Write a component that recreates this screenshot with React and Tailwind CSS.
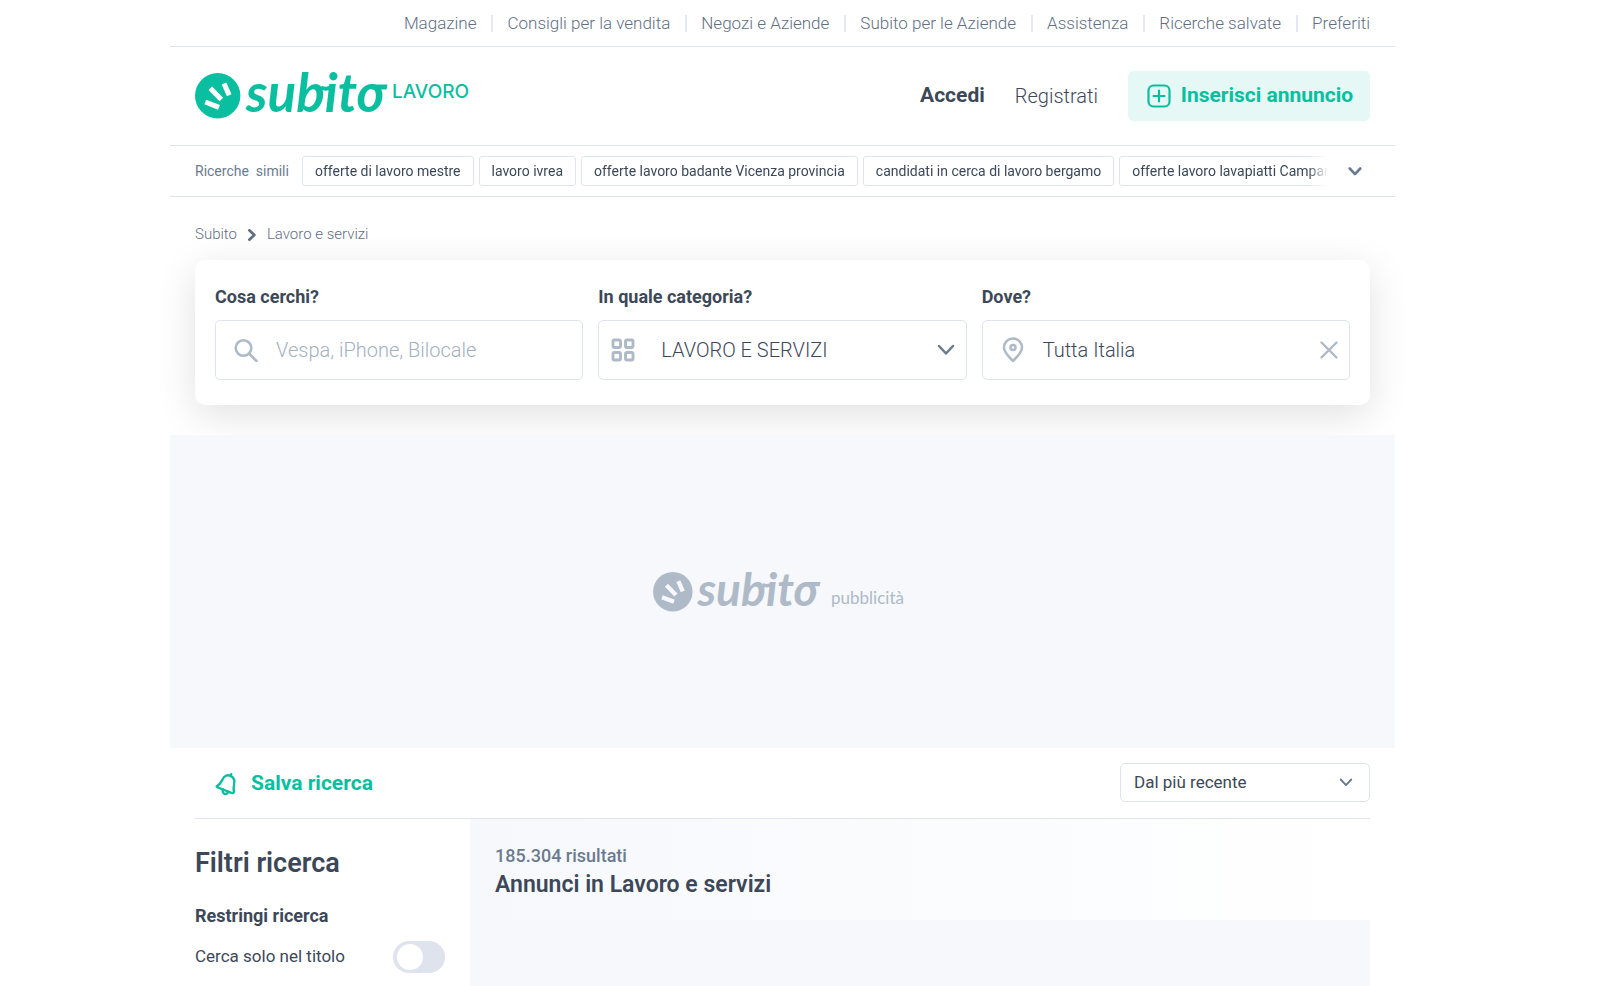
import { useState } from "react";

const topLinks = [
  "Magazine",
  "Consigli per la vendita",
  "Negozi e Aziende",
  "Subito per le Aziende",
  "Assistenza",
  "Ricerche salvate",
  "Preferiti",
];

const similarSearches = [
  "offerte di lavoro mestre",
  "lavoro ivrea",
  "offerte lavoro badante Vicenza provincia",
  "candidati in cerca di lavoro bergamo",
  "offerte lavoro lavapiatti Campania",
];

const Chevron = ({ className, strokeWidth = 2 }) => (
  <svg
    viewBox="0 0 18 12"
    fill="none"
    stroke="currentColor"
    strokeWidth={strokeWidth}
    strokeLinecap="round"
    strokeLinejoin="round"
    className={className}
    aria-hidden="true"
  >
    <path d="M2 2l7 7.5L16 2" />
  </svg>
);

const Logo = ({ className, markFill }) => (
  <svg viewBox="0 0 193 46" fill="currentColor" className={className} role="img">
    <circle cx="22.7" cy="22.7" r="22.7" />
    <g stroke={markFill} strokeWidth="5">
      <path d="M10.300 29l13.700 5.300" />
      <path d="M15.300 15.300l11 11.200" />
      <path d="M29 10.500l5.200 11.800" />
    </g>
    <text
      x="51"
      y="39"
      fontFamily="Lato, sans-serif"
      fontWeight="700"
      fontStyle="italic"
      fontSize="53"
    >
      subito
    </text>
    <path d="M126 14.500q6 3 13-1.500" fill="none" stroke="currentColor" strokeWidth="4" />
    <path d="M176 11.500h16.500l-1 5h-15z" />
  </svg>
);

const TopNav = () => (
  <nav className="flex h-[47px] items-center justify-end border-b border-[#dfe3ee] px-[25px] text-[17px] font-light text-[#5f6f83]">
    {topLinks.map((label, i) => (
      <a
        key={label}
        href="#"
        className={
          i === 0
            ? "pr-[15px] leading-[17px]"
            : "border-l-2 border-[#e6e9f5] pr-[15px] pl-3.5 leading-[17px] last:pr-0"
        }
      >
        {label}
      </a>
    ))}
  </nav>
);

const Header = () => (
  <header className="flex h-[99px] items-center justify-between border-b border-[#dfe3ee] px-[25px]">
    <a href="#" className="flex items-start gap-1 text-[#0abf9f]">
      <Logo className="h-[46px] w-[193px] overflow-visible" markFill="#ffffff" />
      <span className="pt-[9px] font-[Inter] text-[19px] leading-5 font-medium">LAVORO</span>
    </a>
    <div className="flex items-center gap-[30px] text-xl text-[#3c4858]">
      <a href="#" className="text-[21px] font-bold">
        Accedi
      </a>
      <a href="#" className="font-light">
        Registrati
      </a>
      <button className="flex h-[50px] w-[242px] items-center justify-center gap-2.5 rounded-[5px] bg-[#e5f8f5] pl-0.5 text-[21px] font-bold text-[#0abf9f]">
        <svg
          viewBox="0 0 24 24"
          fill="none"
          stroke="currentColor"
          strokeWidth="2.200"
          strokeLinecap="round"
          className="size-6 shrink-0"
          aria-hidden="true"
        >
          <rect x="1.500" y="1.500" width="21" height="21" rx="5" />
          <path d="M12 6.500v11M6.500 12h11" />
        </svg>
        Inserisci annuncio
      </button>
    </div>
  </header>
);

const SimilarSearches = () => (
  <div className="flex h-[51px] items-center border-b border-[#dfe3ee] px-[25px] text-sm text-[#3c4858]">
    <span className="w-[107px] shrink-0 text-[#6b7b8f]">Ricerche&nbsp; simili</span>
    <div className="flex min-w-0 flex-1 gap-[5px] overflow-hidden mask-r-from-[calc(100%-20px)]">
      {similarSearches.map((label) => (
        <a
          key={label}
          href="#"
          className="h-[30px] shrink-0 rounded-[3px] border border-[#dfe3f2] px-3 leading-7 whitespace-nowrap"
        >
          {label}
        </a>
      ))}
    </div>
    <button aria-label="Mostra tutte" className="flex w-[42px] justify-end pr-2 text-[#6b7b8f]">
      <Chevron className="h-[9px] w-[14px]" strokeWidth={3.5} />
    </button>
  </div>
);

const SearchBox = () => {
  const [query, setQuery] = useState("");
  const [place, setPlace] = useState("Tutta Italia");
  return (
    <form className="mx-[25px] grid h-[145px] grid-cols-3 gap-[15px] rounded-[10px] bg-white px-5 pt-[25px] shadow-[0_10px_40px_rgba(0,0,0,0.12)]">
      <div>
        <label htmlFor="query" className="mb-[11px] block text-lg leading-6 font-bold">
          Cosa cerchi?
        </label>
        <div className="flex h-[60px] items-center rounded-[5px] border border-[#dfe3f0] pl-[18px]">
          <svg
            viewBox="0 0 24 24"
            fill="none"
            stroke="#aebac7"
            strokeWidth="2.600"
            strokeLinecap="round"
            className="size-6 shrink-0"
            aria-hidden="true"
          >
            <circle cx="9.500" cy="10" r="7.800" />
            <path d="M15.500 16l7 7" />
          </svg>
          <input
            id="query"
            value={query}
            onChange={(e) => setQuery(e.target.value)}
            placeholder="Vespa, iPhone, Bilocale"
            className="min-w-0 flex-1 pl-[18px] text-xl font-light outline-none placeholder:text-[#a3b0bf]"
          />
        </div>
      </div>
      <div>
        <label htmlFor="category" className="mb-[11px] block text-lg leading-6 font-bold">
          In quale categoria?
        </label>
        <div className="relative flex h-[60px] items-center rounded-[5px] border border-[#dfe3f0] pl-3">
          <svg
            viewBox="0 0 24 24"
            fill="none"
            stroke="#aebac7"
            strokeWidth="2.900"
            className="size-6 shrink-0"
            aria-hidden="true"
          >
            <rect x="2" y="2" width="7.500" height="7.500" rx="1.500" />
            <rect x="14.500" y="2" width="7.500" height="7.500" rx="1.500" />
            <rect x="2" y="14.500" width="7.500" height="7.500" rx="1.500" />
            <rect x="14.500" y="14.500" width="7.500" height="7.500" rx="1.500" />
          </svg>
          <select
            id="category"
            className="h-full min-w-0 flex-1 appearance-none pl-[26px] text-xl font-light outline-none"
          >
            <option>LAVORO E SERVIZI</option>
          </select>
          <Chevron
            className="pointer-events-none absolute right-[11px] h-3 w-[18px] text-[#6b7b8f]"
            strokeWidth={2.5}
          />
        </div>
      </div>
      <div>
        <label htmlFor="place" className="mb-[11px] block text-lg leading-6 font-bold">
          Dove?
        </label>
        <div className="flex h-[60px] items-center rounded-[5px] border border-[#dfe3f0] pr-[11px] pl-[18px]">
          <svg
            viewBox="0 0 24 26"
            fill="none"
            stroke="#aebac7"
            strokeWidth="2.500"
            strokeLinejoin="round"
            className="h-[26px] w-6 shrink-0"
            aria-hidden="true"
          >
            <path d="M12 24C9 20.500 3 16 3 10.500a9 9 0 0 1 18 0C21 16 15 20.500 12 24z" />
            <circle cx="12" cy="10.500" r="2.500" />
          </svg>
          <input
            id="place"
            value={place}
            onChange={(e) => setPlace(e.target.value)}
            className="min-w-0 flex-1 pl-[18px] text-xl font-light outline-none"
          />
          <button type="button" aria-label="Cancella" onClick={() => setPlace("")}>
            <svg
              viewBox="0 0 18 18"
              fill="none"
              stroke="#aebac7"
              strokeWidth="2.400"
              strokeLinecap="round"
              className="size-[18px]"
            >
              <path d="M1.500 1.500l15 15M16.500 1.500l-15 15" />
            </svg>
          </button>
        </div>
      </div>
    </form>
  );
};

const Toolbar = () => (
  <div className="mx-[25px] flex h-[71px] items-start justify-between border-b border-[#dfe3ee] pt-[15px]">
    <button className="flex h-[41px] items-center gap-3.5 pl-5 text-[21px] font-bold text-[#0abf9f]">
      <svg
        viewBox="0 0 24 24"
        fill="none"
        stroke="currentColor"
        strokeWidth="2.600"
        strokeLinecap="round"
        strokeLinejoin="round"
        className="size-[22px]"
        aria-hidden="true"
      >
        <path d="M2 14.500C5.500 12.500 6.500 10.500 8 7.500C10 3 13.500 1.500 17 3.200C21 5.200 21.800 8.500 20.800 12.500C20 16 20 18 20.800 20.200C20.500 22 19 22.300 17 21.300L3.500 15.800C2 15.300 1.500 15 2 14.500z" />
        <path d="M17 3l.8-1.800M8.500 18c-.5 2.500 0 4 1.800 4.800 1.700.6 3.200-.3 4.200-2.300" />
      </svg>
      Salva ricerca
    </button>
    <div className="relative flex h-[39px] w-[250px] items-center">
      <select
        aria-label="Ordina per"
        className="size-full appearance-none rounded-[5px] border border-[#dfe3f0] bg-white pb-0.5 pl-[13px] text-[17px] leading-6 outline-none"
      >
        <option>Dal più recente</option>
      </select>
      <Chevron
        className="pointer-events-none absolute right-[17px] h-[9px] w-[14px] text-[#6b7b8f]"
        strokeWidth={2.5}
      />
    </div>
  </div>
);

const Filters = () => {
  const [titleOnly, setTitleOnly] = useState(false);
  return (
    <aside className="w-[275px] shrink-0 pt-6 pr-[25px]">
      <h2 className="text-[27px] leading-10 font-semibold">Filtri ricerca</h2>
      <h3 className="mt-[19px] text-lg leading-7 font-bold">Restringi ricerca</h3>
      <label className="mt-[11px] flex h-8 items-center justify-between text-[17px]">
        Cerca solo nel titolo
        <input
          type="checkbox"
          checked={titleOnly}
          onChange={(e) => setTitleOnly(e.target.checked)}
          className="h-8 w-[52px] appearance-none rounded-full bg-[#dfe3ee] p-[3px] before:ml-px before:block before:size-[26px] before:rounded-full before:bg-white checked:bg-[#0abf9f] checked:before:ml-[19px]"
        />
      </label>
    </aside>
  );
};

const App = () => (
  <div className="min-h-screen bg-white pr-[42px] font-[Roboto,sans-serif] text-[#3c4858]">
    <div className="mx-auto flex min-h-screen max-w-[1225px] flex-col">
      <TopNav />
      <Header />
      <SimilarSearches />
      <div className="flex h-[63px] items-center gap-[9px] px-[25px] pt-3 text-[15px] font-light text-[#5f6f83]">
        <a href="#">Subito</a>
        <Chevron className="h-2 w-3 -rotate-90" strokeWidth={4} />
        <a href="#">Lavoro e servizi</a>
      </div>
      <SearchBox />
      <div className="relative mt-[30px] flex h-[313px] items-center justify-center gap-2.5 bg-[#f6f8fc] pr-2 text-[#aebac7]">
        <Logo className="h-10 w-[168px] overflow-visible" markFill="#f6f8fc" />
        <span className="pt-3 font-[Lato] text-[17px]">pubblicità</span>
      </div>
      <Toolbar />
      <div className="mx-[25px] flex flex-1">
        <Filters />
        <main className="flex-1 bg-[#f6f8fc]">
          <div className="h-[101px] bg-linear-to-r from-[#f6f8fc] to-white px-[25px] pt-[25px]">
            <p className="text-lg leading-6 font-medium text-[#6b7b8f]">185.304 risultati</p>
            <h1 className="text-[23px] leading-[34px] font-semibold">
              Annunci in Lavoro e servizi
            </h1>
          </div>
        </main>
      </div>
    </div>
  </div>
);

export default App;
